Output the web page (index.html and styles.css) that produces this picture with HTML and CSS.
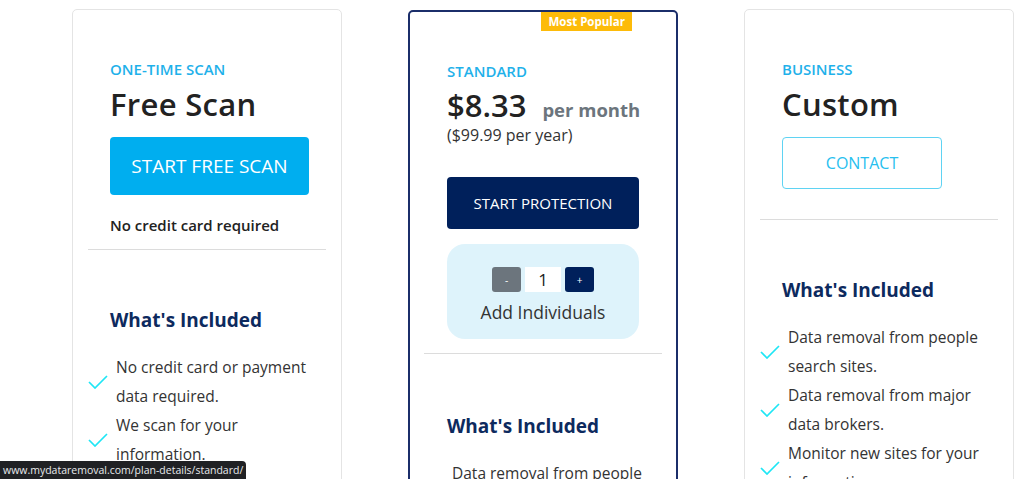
FILE: index.html
```html
<!DOCTYPE html>
<html lang="en">
<head>
  <meta charset="UTF-8">
  <title>Plans - My Data Removal</title>
  <link rel="stylesheet" href="styles.css">
</head>
<body>
  <main class="pricing">
    <!-- One-time scan -->
    <section class="card">
      <div class="card-top">
        <p class="label">One-Time Scan</p>
        <h2 class="title">Free Scan</h2>
        <a href="#" class="btn btn-scan">START FREE SCAN</a>
        <p class="note">No credit card required</p>
      </div>
      <hr class="divider">
      <h3 class="included">What's Included</h3>
      <ul class="features">
        <li><svg class="check" viewBox="0 0 20 14"><polyline points="1,7 7,13 19,1"/></svg><span>No credit card or payment data required.</span></li>
        <li><svg class="check" viewBox="0 0 20 14"><polyline points="1,7 7,13 19,1"/></svg><span>We scan for your information.</span></li>
      </ul>
    </section>

    <!-- Standard -->
    <section class="card card-popular">
      <span class="badge">Most Popular</span>
      <div class="card-top">
        <p class="label">Standard</p>
        <div class="price">
          <span class="amount">$8.33</span>
          <span class="period">per month</span>
        </div>
        <p class="yearly">($99.99 per year)</p>
        <a href="#" class="btn btn-protect">START PROTECTION</a>
        <div class="individuals">
          <div class="stepper">
            <button class="step step-minus">-</button>
            <span class="qty">1</span>
            <button class="step step-plus">+</button>
          </div>
          <p>Add Individuals</p>
        </div>
      </div>
      <hr class="divider">
      <h3 class="included">What's Included</h3>
      <ul class="features">
        <li><svg class="check" viewBox="0 0 20 14"><polyline points="1,7 7,13 19,1"/></svg><span>Data removal from people search sites.</span></li>
      </ul>
    </section>

    <!-- Business -->
    <section class="card">
      <div class="card-top">
        <p class="label">Business</p>
        <h2 class="title">Custom</h2>
        <a href="#" class="btn btn-contact">CONTACT</a>
      </div>
      <hr class="divider">
      <h3 class="included">What's Included</h3>
      <ul class="features">
        <li><svg class="check" viewBox="0 0 20 14"><polyline points="1,7 7,13 19,1"/></svg><span>Data removal from people search sites.</span></li>
        <li><svg class="check" viewBox="0 0 20 14"><polyline points="1,7 7,13 19,1"/></svg><span>Data removal from major data brokers.</span></li>
        <li><svg class="check" viewBox="0 0 20 14"><polyline points="1,7 7,13 19,1"/></svg><span>Monitor new sites for your information.</span></li>
      </ul>
    </section>
  </main>

  <div class="status">www.mydataremoval.com/plan-details/standard/</div>
</body>
</html>
```

FILE: styles.css
```css
* {
  box-sizing: border-box;
  margin: 0;
  padding: 0;
}

body {
  background: #fff;
  color: #333;
  font-family: "Open Sans", Arial, sans-serif;
  overflow: hidden;
}

.pricing {
  display: flex;
  align-items: flex-start;
  gap: 66px;
  padding: 9px 0 0 72px;
}

.card {
  position: relative;
  width: 270px;
  min-height: 620px;
  border: 1px solid #e4e4e4;
  border-radius: 5px;
  background: #fff;
}

.card-popular {
  border: 2px solid #1b2e6a;
  margin-top: 1px;
}

.card-top {
  padding: 49px 37px 0;
}

.badge {
  position: absolute;
  top: 0;
  right: 44px;
  background: #fdbb09;
  color: #fff;
  font-size: 11.5px;
  font-weight: 700;
  line-height: 19px;
  padding: 0 7px;
}

.label {
  color: #1fb1ea;
  font-size: 15px;
  font-weight: 600;
  line-height: 20px;
  text-transform: uppercase;
}

.title {
  color: #222;
  font-size: 31px;
  font-weight: 600;
  line-height: 34px;
  letter-spacing: 0.3px;
  margin-top: 8px;
}

.btn {
  display: flex;
  align-items: center;
  justify-content: center;
  text-decoration: none;
  border-radius: 4px;
}

.btn-scan {
  width: 199px;
  height: 58px;
  margin-top: 16px;
  background: #00aeef;
  color: #fff;
  font-size: 19px;
}

.note {
  color: #222;
  font-size: 15px;
  font-weight: 600;
  line-height: 22px;
  margin-top: 19px;
}

.btn-contact {
  width: 160px;
  height: 52px;
  margin-top: 16px;
  border: 1px solid #5fd3f3;
  color: #27c0ef;
  font-size: 16px;
}

.price {
  display: flex;
  align-items: baseline;
  gap: 16px;
  margin-top: 6px;
  white-space: nowrap;
}

.amount {
  color: #222;
  font-size: 31px;
  font-weight: 600;
  line-height: 36px;
}

.period {
  color: #6c757d;
  font-size: 18.5px;
  font-weight: 700;
}

.yearly {
  color: #333;
  font-size: 16px;
  line-height: 22px;
  margin-top: 1px;
}

.btn-protect {
  width: 192px;
  height: 52px;
  margin-top: 31px;
  background: #00205b;
  color: #fff;
  font-size: 15px;
}

.individuals {
  width: 192px;
  height: 95px;
  margin-top: 15px;
  background: #def3fb;
  border-radius: 18px;
  padding-top: 23px;
  text-align: center;
}

.individuals p {
  color: #333;
  font-size: 17.5px;
  line-height: 24px;
  margin-top: 8px;
}

.stepper {
  display: flex;
  justify-content: center;
  gap: 4px;
}

.step {
  width: 29px;
  height: 25px;
  border: none;
  border-radius: 3px;
  color: #fff;
  font-size: 10px;
  font-family: inherit;
}

.step-minus {
  background: #6c757d;
}

.step-plus {
  background: #00205b;
}

.qty {
  width: 36px;
  height: 25px;
  background: #fff;
  color: #222;
  font-size: 17px;
  line-height: 25px;
}

.divider {
  border: none;
  border-top: 1px solid #dcdcdc;
  margin: 13px 15px 0;
}

.card:last-child .divider {
  margin-top: 30px;
}

.card-popular .divider {
  margin: 14px 14px 0;
}

.included {
  color: #0d2a5e;
  font-size: 19px;
  font-weight: 700;
  line-height: 26px;
  margin-top: 57px;
  padding-left: 37px;
}

.card-popular .included {
  margin-top: 59px;
}

.features {
  list-style: none;
  margin-top: 20px;
  padding: 0 20px 0 15px;
}

.features li {
  display: flex;
  align-items: center;
  gap: 8px;
  color: #333;
  font-size: 15.5px;
  line-height: 29px;
}

.check {
  flex: none;
  width: 20px;
  height: 14px;
  fill: none;
  stroke: #1ee6f5;
  stroke-width: 1.7;
}

.card-popular .features li {
  padding-left: 21px;
  gap: 0;
}

.card-popular .check {
  margin-left: -20px;
  margin-right: 6px;
}

.status {
  position: fixed;
  left: 0;
  bottom: 0;
  background: #202124;
  color: #e8eaed;
  font-family: "Open Sans", Arial, sans-serif;
  font-size: 10.5px;
  line-height: 18px;
  padding: 0 3px;
  border-top-right-radius: 4px;
}
```
